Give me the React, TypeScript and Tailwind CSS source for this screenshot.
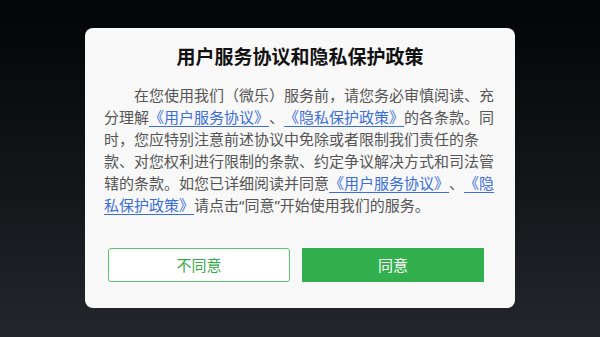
export default function App() {
  const font = { fontFamily: '"Noto Sans", "Noto Sans CJK SC", sans-serif' };

  return (
    <div
      className="w-[600px] h-[337px] bg-gradient-to-b from-[#040506] to-[#23262b] pt-[28px] pl-[85px]"
      style={font}
    >
      <div className="w-[430px] h-[280px] rounded-[8px] bg-[#f8f8f8] pt-[16px] px-[19px] [text-spacing-trim:space-all]">
        <h1 className="text-center text-[19px] leading-[27px] font-bold text-[#111]">
          用户服务协议和隐私保护政策
        </h1>
        <p className="mt-[13px] w-[393px] text-[15px] leading-[22px] text-[#555] indent-[30px]">
          在您使用我们（微乐）服务前，请您务必审慎阅读、充分理解
          <a className="text-[#3b6fd6] underline underline-offset-[3px]">《用户服务协议》</a>、
          <a className="text-[#3b6fd6] underline underline-offset-[3px]">《隐私保护政策》</a>
          的各条款。同时，您应特别注意前述协议中免除或者限制我们责任的条款、对您权利进行限制的条款、约定争议解决方式和司法管辖的条款。如您已详细阅读并同意
          <a className="text-[#3b6fd6] underline underline-offset-[3px]">《用户服务协议》</a>、
          <a className="text-[#3b6fd6] underline underline-offset-[3px]">《隐私保护政策》</a>
          请点击“同意”开始使用我们的服务。
        </p>
        <div className="mt-[32px] ml-[4px] flex gap-[12px]">
          <button className="w-[182px] h-[34px] rounded-[3px] border border-[#5cc46c] bg-white text-[15px] text-[#3aa94c]">
            不同意
          </button>
          <button className="w-[182px] h-[34px] bg-[#33b04e] text-[15px] text-white">
            同意
          </button>
        </div>
      </div>
    </div>
  );
}
